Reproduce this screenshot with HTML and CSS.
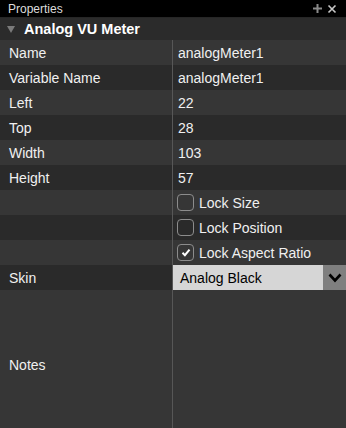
FILE: index.html
```html
<!DOCTYPE html>
<html lang="en">
<head>
    <meta charset="UTF-8">
    <title>Properties</title>
    <link rel="stylesheet" href="styles.css">
</head>
<body>
    <div class="panel">
        <div class="titlebar">
            <span class="title">Properties</span>
            <span class="tools">
                <svg width="11" height="11" viewBox="0 0 11 11"><path d="M5.5 1v9M1 5.5h9" stroke="#8a8a8a" stroke-width="2"/></svg>
                <svg width="10" height="10" viewBox="0 0 10 10"><path d="M1.5 1.5l7 7M8.5 1.5l-7 7" stroke="#c8c8c8" stroke-width="1.6"/></svg>
            </span>
        </div>

        <div class="section">
            <span class="caret"></span>
            <span>Analog VU Meter</span>
        </div>

        <div class="row light"><div class="key">Name</div><div class="val">analogMeter1</div></div>
        <div class="row dark"><div class="key">Variable Name</div><div class="val">analogMeter1</div></div>
        <div class="row light"><div class="key">Left</div><div class="val">22</div></div>
        <div class="row dark"><div class="key">Top</div><div class="val">28</div></div>
        <div class="row light"><div class="key">Width</div><div class="val">103</div></div>
        <div class="row dark"><div class="key">Height</div><div class="val">57</div></div>
        <div class="row light"><div class="key"></div><div class="val check"><span class="box"></span>Lock Size</div></div>
        <div class="row dark"><div class="key"></div><div class="val check"><span class="box"></span>Lock Position</div></div>
        <div class="row light">
            <div class="key"></div>
            <div class="val check">
                <span class="box"><svg width="10" height="9" viewBox="0 0 10 9"><path d="M1.5 4.8l2.4 2.4 4.6-5.6" fill="none" stroke="#fff" stroke-width="2"/></svg></span>Lock Aspect Ratio
            </div>
        </div>
        <div class="row dark">
            <div class="key">Skin</div>
            <div class="val select">
                <span class="choice">Analog Black</span>
                <span class="arrow"><svg width="14" height="10" viewBox="0 0 14 10"><path d="M1.5 1.5l5.5 6 5.5-6" fill="none" stroke="#000" stroke-width="2.6"/></svg></span>
            </div>
        </div>
        <div class="row notes light"><div class="key">Notes</div><div class="val"></div></div>
    </div>
</body>
</html>
```

FILE: styles.css
```css
* {
    margin: 0;
    padding: 0;
    box-sizing: border-box;
}

body {
    font-family: "Liberation Sans", Arial, sans-serif;
    background: #363636;
    color: #f0f0f0;
    width: 346px;
    height: 428px;
    overflow: hidden;
}

.panel {
    display: flex;
    flex-direction: column;
}

.titlebar {
    height: 18px;
    background: #000;
    display: flex;
    align-items: center;
    justify-content: space-between;
    padding: 0 9px 0 8px;
    border-bottom: 1px solid #262626;
}

.title {
    font-size: 12px;
    color: #dcdcdc;
}

.tools {
    display: flex;
    align-items: center;
    gap: 4px;
}

.section {
    height: 22px;
    background: #2b2b2b;
    display: flex;
    align-items: center;
    padding-left: 7px;
    font-size: 14.5px;
    font-weight: bold;
    color: #fff;
}

.caret {
    width: 0;
    height: 0;
    border-left: 4px solid transparent;
    border-right: 4px solid transparent;
    border-top: 7px solid #7a7a7a;
    margin-right: 9px;
}

.row {
    display: flex;
    height: 25px;
    font-size: 14px;
    flex-shrink: 0;
}

.row.light {
    background: #363636;
}

.row.dark {
    background: #2a2a2a;
}

.key {
    width: 173px;
    padding-left: 9px;
    display: flex;
    align-items: center;
    border-right: 1px solid #575757;
}

.val {
    flex: 1;
    display: flex;
    align-items: center;
    padding-left: 5px;
}

.check {
    padding-left: 4px;
}

.box {
    width: 17px;
    height: 17px;
    border: 1px solid #8c8c8c;
    border-radius: 4px;
    margin-right: 5px;
    display: flex;
    align-items: center;
    justify-content: center;
}

.select {
    padding: 0;
    background: #d6d6d6;
    color: #000;
}

.choice {
    flex: 1;
    padding-left: 7px;
}

.arrow {
    width: 23px;
    height: 100%;
    background: #7f7f7f;
    display: flex;
    align-items: center;
    justify-content: center;
}

.row.notes {
    height: 150px;
}
```
